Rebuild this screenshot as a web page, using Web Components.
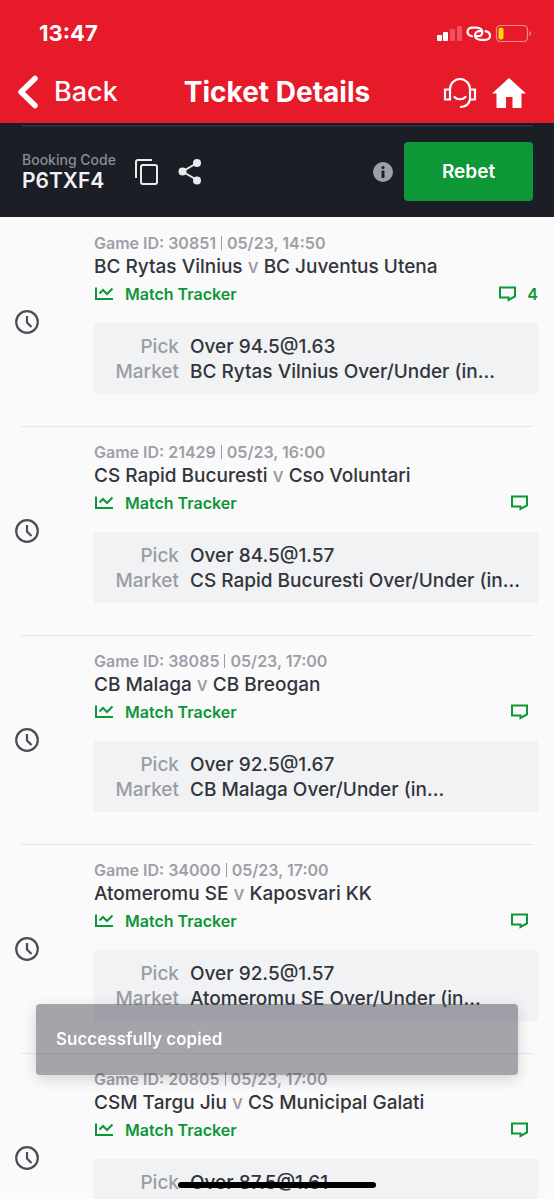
<!DOCTYPE html>
<html lang="en">
<head>
<meta charset="utf-8">
<meta name="viewport" content="width=device-width, initial-scale=1">
<title>Ticket Details</title>
<style>
  html, body { margin: 0; height: 100%; overflow: hidden; }
  body { background: #fafafa; color: #32353d; font-family: Inter, "Liberation Sans", sans-serif; }
</style>
</head>
<body>
<ticket-page>
  <status-bar slot="top">13:47</status-bar>
  <nav-bar slot="top">Ticket Details</nav-bar>
  <booking-bar slot="top" code="P6TXF4"></booking-bar>
  <game-card game="30851" time="05/23, 14:50" home="BC Rytas Vilnius" away="BC Juventus Utena" pick="Over 94.5@1.63" comments="4"></game-card>
  <game-card game="21429" time="05/23, 16:00" home="CS Rapid Bucuresti" away="Cso Voluntari" pick="Over 84.5@1.57"></game-card>
  <game-card game="38085" time="05/23, 17:00" home="CB Malaga" away="CB Breogan" pick="Over 92.5@1.67"></game-card>
  <game-card game="34000" time="05/23, 17:00" home="Atomeromu SE" away="Kaposvari KK" pick="Over 92.5@1.57"></game-card>
  <game-card game="20805" time="05/23, 17:00" home="CSM Targu Jiu" away="CS Municipal Galati" pick="Over 87.5@1.61"></game-card>
  <toast-message slot="overlay">Successfully copied</toast-message>
  <home-indicator slot="overlay"></home-indicator>
</ticket-page>

<script>
  class Base extends HTMLElement {
    connectedCallback() {
      if (!this.shadowRoot) this.attachShadow({ mode: 'open' }).innerHTML = this.view();
    }
  }

  customElements.define('ticket-page', class extends Base {
    view() {
      return `<style>
        :host { display: flex; flex-direction: column; height: 100vh; }
        header { flex: none; }
        main { flex: 1; min-height: 0; overflow: hidden; padding-top: 1px; }
      </style>
      <header><slot name="top"></slot></header>
      <main><slot></slot></main>
      <slot name="overlay"></slot>`;
    }
  });

  customElements.define('status-bar', class extends Base {
    view() {
      return `<style>
        :host { display: flex; justify-content: space-between; align-items: center; height: 66px; padding: 0 22px 0 39px; background: #e61a29; color: #fff; font-size: 22px; font-weight: 700; }
        svg { display: block; }
      </style>
      <slot></slot>
      <svg width="95" height="20" viewBox="0 0 95 20" aria-hidden="true">
        <g fill="#fff">
          <rect x="0" y="12" width="5" height="6" rx="1"/>
          <rect x="6" y="9" width="5" height="9" rx="1"/>
          <rect x="13" y="6" width="5" height="12" rx="1" opacity=".25"/>
          <rect x="20" y="3" width="5" height="15" rx="1" opacity=".25"/>
        </g>
        <g fill="none" stroke="#fff" stroke-width="2.2" stroke-linecap="round">
          <path d="M35 13.200C32 12.500 30.500 10.500 30.500 8.700C30.500 6.300 32.500 4.600 35 4.600H39.500C43 4.600 45.300 6.600 45.300 9.200C45.300 11.600 43.500 13.200 41 13.200H39.500"/>
          <path d="M48.500 8.200C51.500 8.800 53 10.700 53 12.700C53 15 51 16.800 48.500 16.800H44C40.500 16.800 38 15 38 12.400C38 10 39.800 8.200 42.300 8.200H44"/>
        </g>
        <rect x="59.500" y="2.500" width="31" height="16" rx="4" fill="none" stroke="#fff" stroke-opacity=".5" stroke-width="1.200"/>
        <rect x="61.500" y="4.500" width="5" height="12" rx="2" fill="#ffd60a"/>
        <path d="M92.500 8v5c2-1 2-4 0-5z" fill="#fff" opacity=".5"/>
      </svg>`;
    }
  });

  customElements.define('nav-bar', class extends Base {
    view() {
      return `<style>
        :host { display: grid; grid-template-columns: 1fr auto 1fr; align-items: center; height: 57px; padding: 0 18px 5px; box-sizing: border-box; background: #e61a29; color: #fff; }
        a { color: inherit; display: flex; text-decoration: none; }
        .back { align-items: center; gap: 16px; font-size: 27px; line-height: 32px; font-weight: 500; }
        h1 { margin: 0; font-size: 28px; line-height: 32px; font-weight: 700; }
        nav { display: flex; justify-content: flex-end; align-items: center; gap: 15px; padding-right: 10px; }
      </style>
      <a class="back" href="#back"><svg width="20" height="34" viewBox="0 0 20 34" fill="none" stroke="#fff" stroke-width="5.500" stroke-linecap="round" stroke-linejoin="round" aria-hidden="true"><path d="M17 3.500 3 17 17 30.500"/></svg>Back</a>
      <h1><slot></slot></h1>
      <nav>
        <a href="#support" aria-label="Support"><svg width="34" height="34" viewBox="0 0 34 34" fill="none" stroke="#fff" stroke-width="2.200"><path d="M2 14.500h5v10h-5zM27 14.500h5v10h-5zM7 14.500A10 10.500 0 0 1 27 14.500M27 24.500c-1 5-5 7.500-10 7.500"/><path d="M11.500 22c2.500 3 8 3 11 0" stroke-linecap="round"/></svg></a>
        <a href="#home" aria-label="Home"><svg width="34" height="34" viewBox="0 0 34 34" fill="#fff"><path d="M17 3 34 18.500H29.500V33H20.500V22H14V33H4.500V18.500H0z"/></svg></a>
      </nav>`;
    }
  });

  customElements.define('booking-bar', class extends Base {
    view() {
      return `<style>
        :host { display: block; padding: 2px 21px 16px 22px; background: #1b1e25; color: #f0f2f5; }
        .row { display: flex; align-items: center; border-top: 2px solid #2d3037; padding-top: 15px; }
        .code { font-size: 21px; line-height: 24px; font-weight: 600; margin-right: 19px; }
        small { display: block; font-size: 14px; line-height: 18px; font-weight: 500; color: #8b8d96; }
        button { border: 0; padding: 0; background: none; color: inherit; font: inherit; display: block; }
        .share { margin-left: 15px; }
        .info { margin: 0 11px 0 auto; }
        .rebet { width: 129px; height: 59px; border-radius: 4px; background: #0d9737; color: #fff; font-size: 19px; font-weight: 600; }
        svg { display: block; }
      </style>
      <div class="row">
        <div class="code"><small>Booking Code</small>${this.getAttribute('code')}</div>
        <button aria-label="Copy"><svg width="28" height="28" viewBox="0 0 28 28" fill="none" stroke="#e8eaee" stroke-width="2"><rect x="6" y="7" width="16" height="19" rx="2"/><path d="M1 20V4a2 2 0 0 1 2-2H17"/></svg></button>
        <button class="share" aria-label="Share"><svg width="24" height="28" viewBox="0 0 24 28" fill="#e8eaee"><path d="M19 5 4.500 13.500 19 22" fill="none" stroke="#e8eaee" stroke-width="2"/><circle cx="19" cy="5" r="4"/><circle cx="4.500" cy="13.500" r="4"/><circle cx="19" cy="22.500" r="4"/></svg></button>
        <button class="info" aria-label="Information"><svg width="20" height="20" viewBox="0 0 20 20"><circle cx="10" cy="10" r="10" fill="#9ca0ab"/><circle cx="10" cy="5.500" r="1.600" fill="#1b1e25"/><rect x="8.500" y="8.500" width="3" height="7.500" rx="1" fill="#1b1e25"/></svg></button>
        <button class="rebet">Rebet</button>
      </div>`;
    }
  });

  customElements.define('game-card', class extends Base {
    view() {
      const v = n => this.getAttribute(n);
      const count = v('comments');
      return `<style>
        :host { display: block; }
        article { display: grid; grid-template-columns: 79px 1fr; padding: 14px 16px 32px 15px; }
        hr { margin: 0 21px; border: 0; height: 1px; background: #e6e7ea; }
        .clock { align-self: center; padding-top: 18px; }
        svg { display: block; }
        p, h2, dl, dd, dt { margin: 0; }
        .meta { display: flex; align-items: center; gap: 5px; font-size: 16px; line-height: 22px; font-weight: 600; color: #9d9fa8; }
        .meta i { width: 1px; height: 14px; background: #9a9ca5; }
        h2 { font-size: 19px; line-height: 26px; font-weight: 500; }
        h2 span { color: #9a9ca5; }
        .links { display: flex; justify-content: space-between; align-items: center; height: 28px; margin-bottom: 15px; }
        a { display: flex; align-items: center; gap: 11px; color: #0d9737; text-decoration: none; font-size: 16px; line-height: 20px; font-weight: 600; }
        .chat { padding-right: ${count ? 0 : 10}px; }
        dl { display: grid; grid-template-columns: 85px 1fr; column-gap: 11px; padding: 11px 0 10px; background: #f1f2f4; font-size: 19px; line-height: 25px; font-weight: 500; }
        dt { text-align: right; color: #9a9ca5; }
        dd { white-space: nowrap; overflow: hidden; }
      </style>
      <article>
        <div class="clock"><svg width="24" height="24" viewBox="0 0 24 24" fill="none" stroke="#4b4e57" stroke-width="2.200" role="img" aria-label="Pending"><circle cx="12" cy="12" r="10.800"/><path d="M12 6v6.500l4.500 4.500"/></svg></div>
        <div>
          <p class="meta"><span>Game ID: ${v('game')}</span><i></i><span>${v('time')}</span></p>
          <h2>${v('home')} <span>v</span> ${v('away')}</h2>
          <div class="links">
            <a href="#tracker"><svg width="20" height="14" viewBox="0 0 20 14" fill="none" stroke="currentColor" stroke-width="2"><path d="M2 0.500V12H19M5.500 6.500 9 3l4 4L18.500 1.500"/></svg>Match Tracker</a>
            <a class="chat" href="#comments" aria-label="Comments"><svg width="17" height="16" viewBox="0 0 17 16" fill="none" stroke="currentColor" stroke-width="2"><path d="M1 1.500H16V10.500L9.500 14V11.500H1z"/></svg>${count || ''}</a>
          </div>
          <dl><dt>Pick</dt><dd>${v('pick')}</dd><dt>Market</dt><dd>${v('home')} Over/Under (in...</dd></dl>
        </div>
      </article>
      <hr>`;
    }
  });

  customElements.define('toast-message', class extends Base {
    view() {
      return `<style>
        :host { position: fixed; left: 36px; right: 36px; bottom: 124px; box-sizing: border-box; padding: 25px 20px; border-radius: 4px; background: rgba(77, 77, 89, .5); box-shadow: 0 4px 14px rgba(0, 0, 0, .16); color: #fff; font-size: 17px; line-height: 21px; font-weight: 600; }
      </style><div role="status"><slot></slot></div>`;
    }
  });

  customElements.define('home-indicator', class extends Base {
    view() {
      return `<style>
        :host { position: fixed; left: 50%; bottom: 11px; width: 198px; height: 6px; margin-left: -99px; border-radius: 3px; background: #000; }
      </style>`;
    }
  });
</script>
</body>
</html>
